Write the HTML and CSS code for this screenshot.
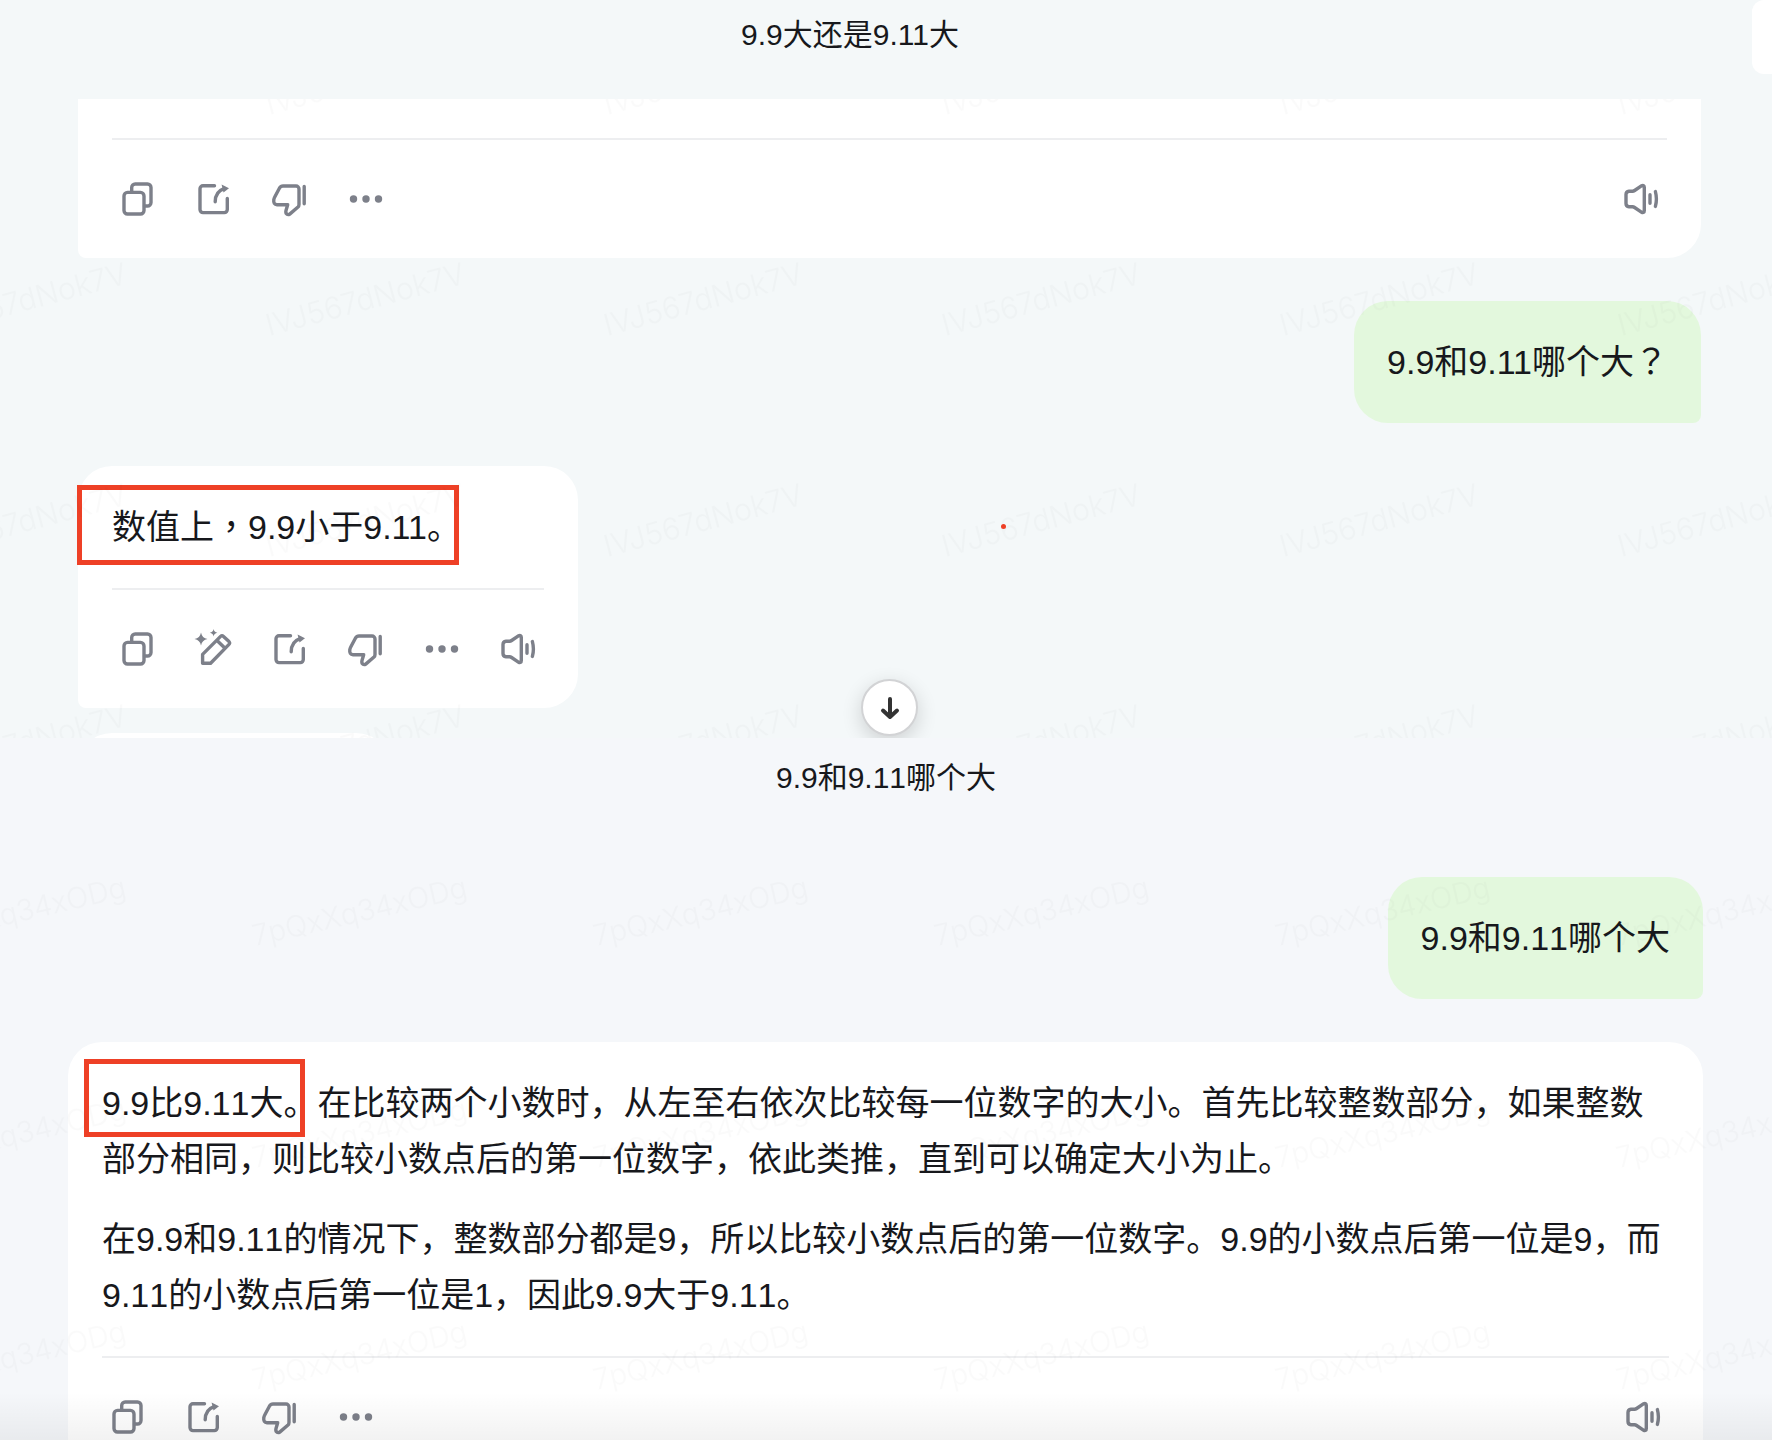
FILE: index.html
```html
<!DOCTYPE html>
<html lang="zh-CN">
<head>
<meta charset="utf-8">
<meta name="viewport" content="width=device-width, initial-scale=1">
<title>9.9和9.11哪个大</title>
<link rel="stylesheet" href="styles.css">
</head>
<body>
<svg class="sprite" aria-hidden="true">
  <symbol id="copy" viewBox="0 0 36 36"><rect x="4" y="11.4" width="20" height="21.6" rx="3.5"/><path d="M11.7 11V6.5A3.5 3.5 0 0 1 15.2 3H27.5A3.5 3.5 0 0 1 31 6.5V21.5A3.5 3.5 0 0 1 27.5 25H24.5"/></symbol>
  <symbol id="share" viewBox="0 0 36 36"><path d="M18.5 4.7H7A3 3 0 0 0 4 7.7V28.6A3 3 0 0 0 7 31.6H28.3A3 3 0 0 0 31.3 28.6V17.5M19.2 20.8C19.2 14 22.5 9.5 28 7.6"/><path class="solid" d="M25.6 3.4L33 7.3L27.5 11.4Z"/></symbol>
  <symbol id="dislike" viewBox="0 0 36 36"><path d="M11 5H24A3 3 0 0 1 27 8V23.5Q27 25 26 26L18 32.9Q15.5 34.3 14 32.2Q13.6 31.2 14 29.5L15.7 23.7H5Q1.2 23.7 1.8 18.6Q2.2 17 3 15.5L7.4 7.2Q8.7 5 11 5ZM32.2 5.5V22.8"/></symbol>
  <symbol id="more" viewBox="0 0 36 36"><g class="solid"><circle cx="5.5" cy="18" r="3.7"/><circle cx="18" cy="18" r="3.7"/><circle cx="30.5" cy="18" r="3.7"/></g></symbol>
  <symbol id="sound" viewBox="0 0 36 36"><path d="M6 10.2H9.5Q10.6 10.2 11.6 9.5L18.4 4.9Q21.3 3.6 21.3 6.6V29.4Q21.3 32.4 18.4 31.1L11.6 26.5Q10.6 25.8 9.5 25.8H6Q3 25.4 3 22.5V13.5Q3 10.6 6 10.2ZM27 13.8V22.2M32.4 10.6Q34.4 18 32.4 25.4"/></symbol>
  <symbol id="rewrite" viewBox="0 0 36 36"><path d="M24.6 5.4Q26 4 27.5 5.4L33 10.6Q34.4 12 33 13.4L14.6 32.3H6.6V23.4ZM21 9.5L28.8 17"/><path class="solid" d="M5 1.5Q6 7 11.5 8Q6 9 5 14.5Q4 9 -1.5 8Q4 7 5 1.5ZM17.6 -2Q18.1 1.2 21.4 1.8Q18.1 2.4 17.6 5.6Q17.1 2.4 13.8 1.8Q17.1 1.2 17.6 -2Z"/></symbol>
</svg>

<section class="panel panel-first">
  <header class="bar bar-first"><h1 class="title">9.9大还是9.11大</h1></header>
  <div class="side-tab"></div>
  <div class="thread thread-first">
    <article class="card card-cut">
      <div class="actions">
        <button class="act" aria-label="复制"><svg class="icon"><use href="#copy"/></svg></button>
        <button class="act" aria-label="分享"><svg class="icon"><use href="#share"/></svg></button>
        <button class="act" aria-label="不喜欢"><svg class="icon"><use href="#dislike"/></svg></button>
        <button class="act" aria-label="更多"><svg class="icon"><use href="#more"/></svg></button>
        <button class="act act-end" aria-label="朗读"><svg class="icon"><use href="#sound"/></svg></button>
      </div>
    </article>
    <p class="bubble">9.9和9.11哪个大<span class="mid-punct" lang="zh-TW">？</span></p>
    <article class="card card-fit">
      <div class="text"><p class="marked marked-wide">数值上<span class="mid-punct" lang="zh-TW">，</span>9.9小于9.11。</p></div>
      <div class="actions">
        <button class="act" aria-label="复制"><svg class="icon"><use href="#copy"/></svg></button>
        <button class="act" aria-label="改写"><svg class="icon"><use href="#rewrite"/></svg></button>
        <button class="act" aria-label="分享"><svg class="icon"><use href="#share"/></svg></button>
        <button class="act" aria-label="不喜欢"><svg class="icon"><use href="#dislike"/></svg></button>
        <button class="act" aria-label="更多"><svg class="icon"><use href="#more"/></svg></button>
        <button class="act" aria-label="朗读"><svg class="icon"><use href="#sound"/></svg></button>
      </div>
    </article>
    <div class="peek"><div class="peek-card"></div></div>
    <svg class="watermark" aria-hidden="true">
      <defs><pattern id="wm1" patternUnits="userSpaceOnUse" x="250" y="141" width="338" height="221"><text class="wm-text" transform="translate(19 96) rotate(-15)">IVJ567dNok7V</text></pattern></defs>
      <rect width="100%" height="100%" fill="url(#wm1)"/>
    </svg>
    <span class="red-dot"></span>
  </div>
  <button class="to-bottom" aria-label="滚动到底部"><svg class="arrow" viewBox="0 0 24 24"><path d="M12 3V21M5 14.5L12 21L19 14.5"/></svg></button>
</section>

<section class="panel panel-second">
  <header class="bar"><h2 class="title">9.9和9.11哪个大</h2></header>
  <div class="thread thread-second">
    <p class="bubble">9.9和9.11哪个大</p>
    <article class="card">
      <div class="text">
        <p class="marked">9.9比9.11大。在比较两个小数时，从左至右依次比较每一位数字的大小。首先比较整数部分，如果整数部分相同，则比较小数点后的第一位数字，依此类推，直到可以确定大小为止。</p>
        <p>在9.9和9.11的情况下，整数部分都是9，所以比较小数点后的第一位数字。9.9的小数点后第一位是9，而9.11的小数点后第一位是1，因此9.9大于9.11。</p>
      </div>
      <div class="actions">
        <button class="act" aria-label="复制"><svg class="icon"><use href="#copy"/></svg></button>
        <button class="act" aria-label="分享"><svg class="icon"><use href="#share"/></svg></button>
        <button class="act" aria-label="不喜欢"><svg class="icon"><use href="#dislike"/></svg></button>
        <button class="act" aria-label="更多"><svg class="icon"><use href="#more"/></svg></button>
        <button class="act act-end" aria-label="朗读"><svg class="icon"><use href="#sound"/></svg></button>
      </div>
    </article>
    <svg class="watermark" aria-hidden="true">
      <defs><pattern id="wm2" patternUnits="userSpaceOnUse" x="230" y="22" width="341" height="222"><text class="wm-text wm-small" transform="translate(25 106) rotate(-13)">7pQxXq34xODg</text></pattern></defs>
      <rect width="100%" height="100%" fill="url(#wm2)"/>
    </svg>
  </div>
  <div class="fade"></div>
</section>
</body>
</html>
```
FILE: styles.css
```css
*, *::after { box-sizing: border-box; }

body {
  margin: 0;
  height: 100vh;
  display: flex;
  flex-direction: column;
  overflow: hidden;
  font-family: "Liberation Sans", "Noto Sans CJK SC", sans-serif;
  font-size: 34px;
  line-height: 56px;
  color: #17181c;
}

p, h1, h2 { margin: 0; }

.sprite { position: absolute; width: 0; height: 0; }

.panel { position: relative; overflow: hidden; }
.panel-first { flex: none; background: #f4f8f9; }
.panel-second {
  flex: 1;
  min-height: 0;
  background: #f5f7fa;
  font-kerning: none;
}

.bar {
  display: flex;
  justify-content: center;
  padding: 20px 0;
}
.bar-first { padding: 15px 72px 44px 0; }
.title {
  font-size: 30px;
  line-height: 40px;
  font-weight: 400;
}

.side-tab {
  position: absolute;
  top: 0;
  right: 0;
  width: 20px;
  height: 74px;
  border-radius: 12px 0 0 12px;
  background: #fff;
}

.thread {
  position: relative;
  display: flex;
  flex-direction: column;
  align-items: stretch;
  gap: 43px;
}
.thread-first { padding: 0 71px 0 78px; }
.thread-second { padding: 59px 69px 40px 68px; }

.card {
  padding: 0 34px;
  background: #fff;
  border-radius: 34px 34px 34px 8px;
}
.card-cut {
  padding-top: 39px;
  border-radius: 0 0 34px 8px;
}
.card-fit { align-self: flex-start; }

.text {
  display: flex;
  flex-direction: column;
  gap: 24px;
  padding: 33px 0;
}

/* punctuation centred in its em square */
.mid-punct { font-family: "Noto Sans CJK TC", sans-serif; line-height: 1; }

.bubble {
  align-self: flex-end;
  padding: 33px;
  background: #e3f8dd;
  border-radius: 34px 34px 8px 34px;
}

.actions {
  display: flex;
  align-items: center;
  gap: 24px;
  height: 120px;
  border-top: 2px solid #edeef0;
}
.act {
  display: flex;
  justify-content: center;
  width: 52px;
  padding: 8px 0;
  border: 0;
  background: none;
  color: #7d808a;
}
.act-end { margin-left: auto; }
.icon {
  width: 36px;
  height: 36px;
  overflow: visible;
  fill: none;
  stroke: currentColor;
  stroke-width: 3.4;
  stroke-linecap: round;
  stroke-linejoin: round;
}
symbol { overflow: visible; }
.solid { fill: currentColor; stroke: none; }

/* annotation frames over the key sentence */
.marked { position: relative; }
.marked::after {
  content: "";
  position: absolute;
  top: -16px;
  left: -18px;
  width: 221px;
  height: 78px;
  border: 5px solid #ee4026;
}
.marked-wide::after {
  top: -14px;
  left: -35px;
  width: 382px;
  height: 80px;
}
.red-dot {
  position: absolute;
  left: 1001px;
  top: 425px;
  width: 5px;
  height: 5px;
  border-radius: 50%;
  background: #ee4026;
}

.peek { height: 5px; margin-top: -18px; overflow: hidden; }
.peek-card {
  width: 312px;
  height: 122px;
  border-radius: 34px;
  background: #fff;
}

.to-bottom {
  position: absolute;
  bottom: 2px;
  left: calc(50% + 4px);
  display: flex;
  align-items: center;
  justify-content: center;
  width: 57px;
  height: 57px;
  margin-left: -29px;
  padding: 0;
  border: 2px solid #d2d3d5;
  border-radius: 50%;
  background: #fff;
  box-shadow: 0 6px 20px rgba(0, 0, 0, 0.16);
}
.arrow {
  width: 24px;
  height: 24px;
  fill: none;
  stroke: #333;
  stroke-width: 4;
  stroke-linecap: round;
  stroke-linejoin: round;
}

.watermark {
  position: absolute;
  inset: 0;
  width: 100%;
  height: 100%;
  pointer-events: none;
}
.wm-text {
  fill: #000;
  fill-opacity: 0.02;
  font-family: "Inter", sans-serif;
  font-size: 30px;
  font-weight: 300;
}
.wm-small { font-size: 29px; }

.fade {
  position: absolute;
  left: 0;
  right: 0;
  bottom: 0;
  height: 48px;
  background: linear-gradient(rgba(0, 0, 0, 0), rgba(0, 0, 0, 0.05));
  pointer-events: none;
}
```
